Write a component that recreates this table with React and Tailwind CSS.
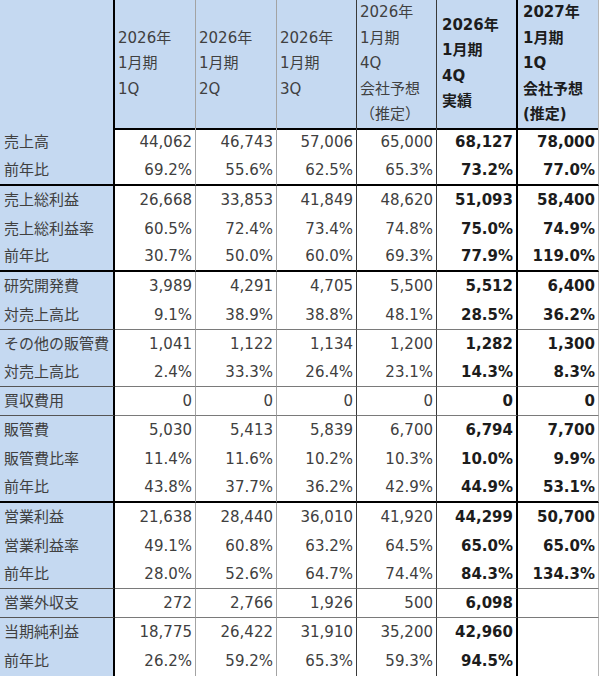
import React from 'react';

const grid = 'grid grid-cols-[115px_81px_81px_80px_80px_81px_81px]';

// right border of each column
const colBorder = [
  'border-r-2 border-r-black',
  'border-r border-r-[#a3a3a3]',
  'border-r border-r-[#a3a3a3]',
  'border-r border-r-[#3a3a3a]',
  'border-r border-r-[#3a3a3a]',
  'border-r-2 border-r-black',
  'border-r border-r-[#b5b5b5]',
];

const headers = [
  { lines: ['2026年', '1月期', '1Q'] },
  { lines: ['2026年', '1月期', '2Q'] },
  { lines: ['2026年', '1月期', '3Q'] },
  { lines: ['2026年', '1月期', '4Q', '会社予想', '（推定）'] },
  { lines: ['2026年', '1月期', '4Q', '実績'], bold: true },
  { lines: ['2027年', '1月期', '1Q', '会社予想', '(推定)'], bold: true },
];

const rows = [
  { label: '売上高', v: ['44,062', '46,743', '57,006', '65,000', '68,127', '78,000'] },
  { label: '前年比', v: ['69.2%', '55.6%', '62.5%', '65.3%', '73.2%', '77.0%'], end: 'thick' },
  { label: '売上総利益', v: ['26,668', '33,853', '41,849', '48,620', '51,093', '58,400'] },
  { label: '売上総利益率', v: ['60.5%', '72.4%', '73.4%', '74.8%', '75.0%', '74.9%'] },
  { label: '前年比', v: ['30.7%', '50.0%', '60.0%', '69.3%', '77.9%', '119.0%'], end: 'thick' },
  { label: '研究開発費', v: ['3,989', '4,291', '4,705', '5,500', '5,512', '6,400'] },
  { label: '対売上高比', v: ['9.1%', '38.9%', '38.8%', '48.1%', '28.5%', '36.2%'], end: 'thin' },
  { label: 'その他の販管費', v: ['1,041', '1,122', '1,134', '1,200', '1,282', '1,300'] },
  { label: '対売上高比', v: ['2.4%', '33.3%', '26.4%', '23.1%', '14.3%', '8.3%'], end: 'thin' },
  { label: '買収費用', v: ['0', '0', '0', '0', '0', '0'], end: 'thin' },
  { label: '販管費', v: ['5,030', '5,413', '5,839', '6,700', '6,794', '7,700'] },
  { label: '販管費比率', v: ['11.4%', '11.6%', '10.2%', '10.3%', '10.0%', '9.9%'] },
  { label: '前年比', v: ['43.8%', '37.7%', '36.2%', '42.9%', '44.9%', '53.1%'], end: 'thick' },
  { label: '営業利益', v: ['21,638', '28,440', '36,010', '41,920', '44,299', '50,700'] },
  { label: '営業利益率', v: ['49.1%', '60.8%', '63.2%', '64.5%', '65.0%', '65.0%'] },
  { label: '前年比', v: ['28.0%', '52.6%', '64.7%', '74.4%', '84.3%', '134.3%'], end: 'thin' },
  { label: '営業外収支', v: ['272', '2,766', '1,926', '500', '6,098', ''], end: 'thin' },
  { label: '当期純利益', v: ['18,775', '26,422', '31,910', '35,200', '42,960', ''] },
  { label: '前年比', v: ['26.2%', '59.2%', '65.3%', '59.3%', '94.5%', ''] },
];

const endBorder = (end, label) => {
  if (end === 'thick') return 'border-b-2 border-b-black';
  if (end === 'thin') return label ? 'border-b border-b-[#555555]' : 'border-b border-b-[#7a7a7a]';
  return '';
};

const App = () => {
  return (
    <div className="w-[600px] h-[676px] overflow-hidden bg-white font-['DejaVu_Sans','Noto_Sans_CJK_JP',sans-serif] text-[15px] text-[#404040]">
      {/* ヘッダー */}
      <div className={`${grid} h-[128px]`}>
        <div className={`bg-[#c5d9f1] border-b-2 border-b-black ${colBorder[0]}`} />
        {headers.map((h, i) => (
          <div
            key={i}
            className={`bg-[#c5d9f1] border-b-2 border-b-black ${colBorder[i + 1]} flex flex-col justify-center leading-[25.5px] ${
              h.bold ? 'font-bold text-[#1c1c1c] pl-[5px]' : 'pl-[3px]'
            }`}
          >
            {h.lines.map((l, j) => (
              <div key={j} className="whitespace-nowrap">{l}</div>
            ))}
          </div>
        ))}
      </div>

      {/* 本体 */}
      {rows.map((r, i) => (
        <div key={i} className={`${grid} h-[28.84px]`}>
          <div className={`bg-[#c5d9f1] ${colBorder[0]} ${endBorder(r.end, true)} flex items-center pl-[4px] whitespace-nowrap`}>
            {r.label}
          </div>
          {r.v.map((val, j) => (
            <div
              key={j}
              className={`${colBorder[j + 1]} ${endBorder(r.end, false)} flex items-center justify-end pr-[3px] whitespace-nowrap ${
                j >= 4 ? 'font-bold text-[#1c1c1c]' : ''
              }`}
            >
              {val}
            </div>
          ))}
        </div>
      ))}
    </div>
  );
};

export default App;
